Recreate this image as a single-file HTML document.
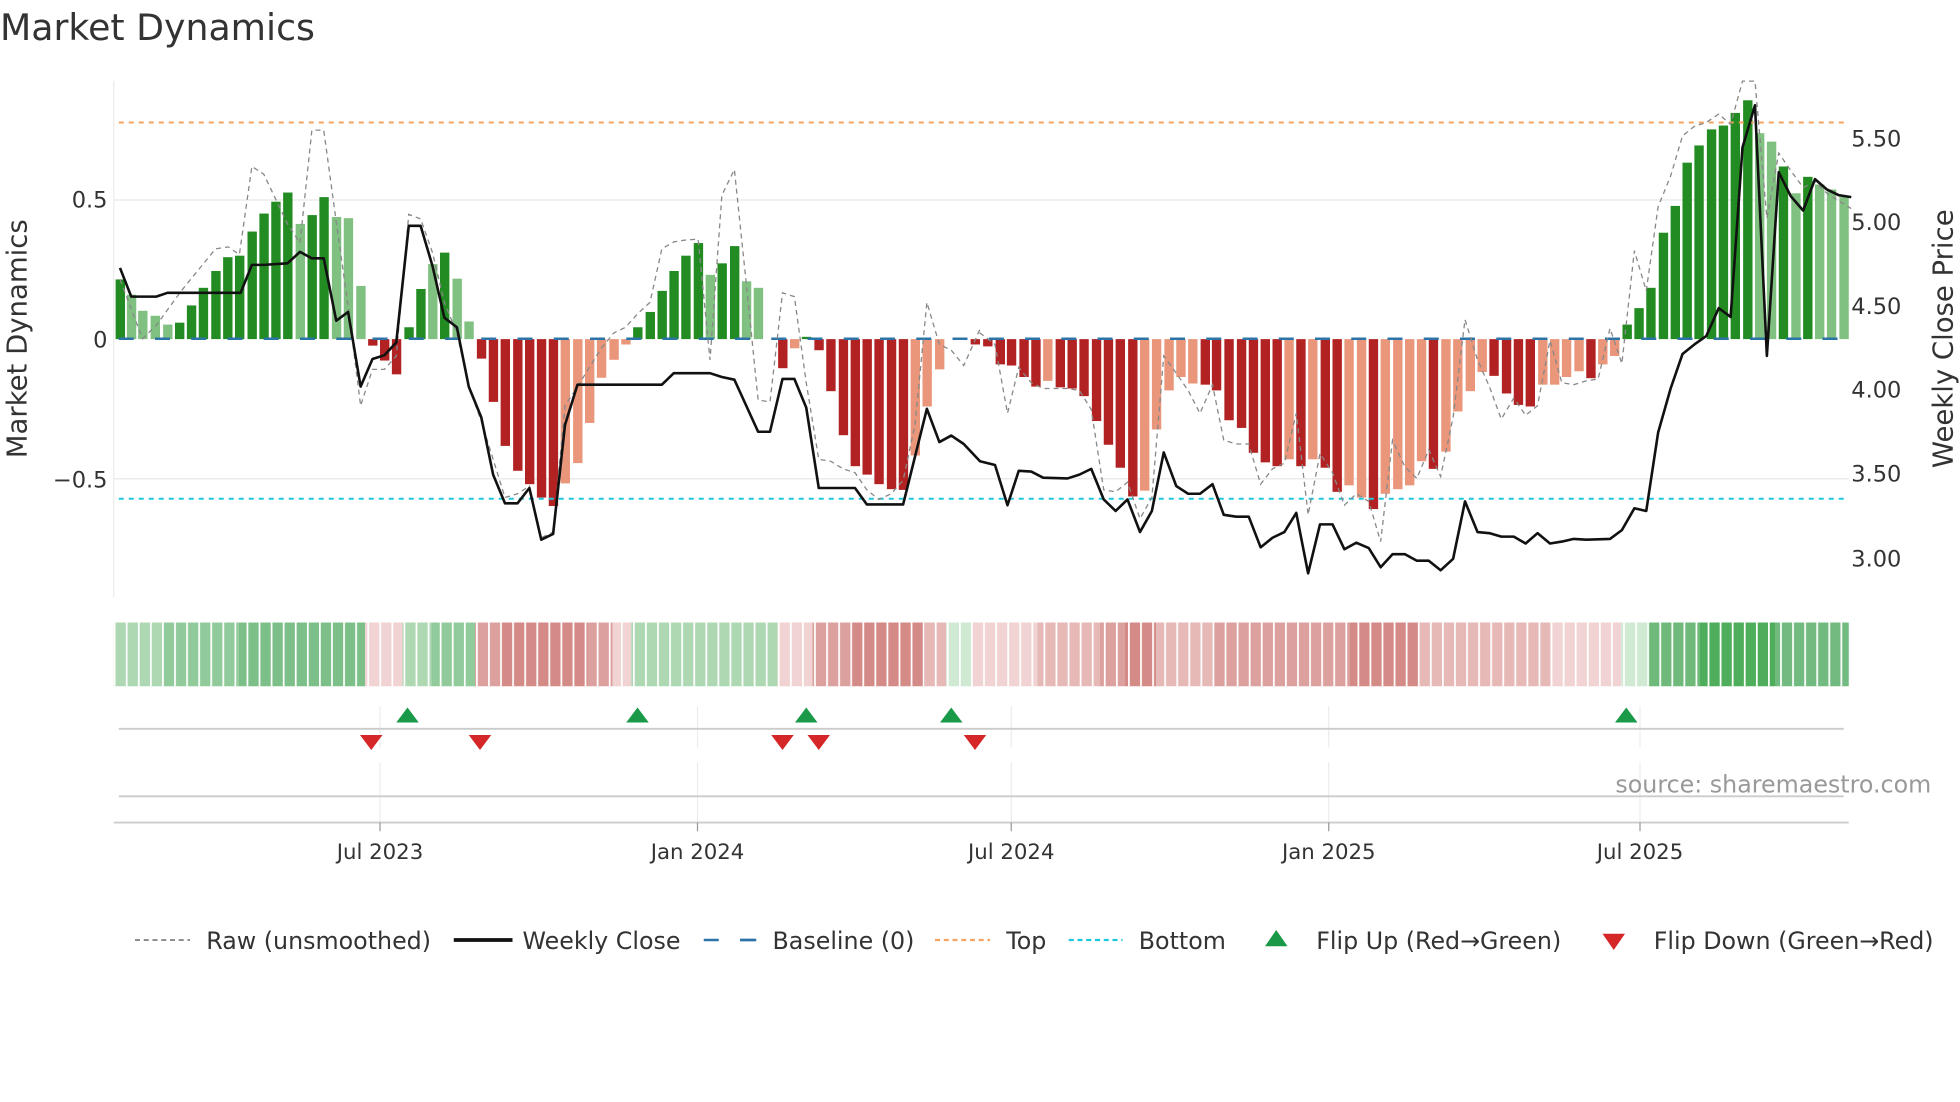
<!DOCTYPE html>
<html><head><meta charset="utf-8"><style>
html,body{margin:0;padding:0;background:#fff;}
svg{display:block;font-family:"DejaVu Sans","Liberation Sans",sans-serif;}
.G{fill:#228b22}.g{fill:#80c080}.R{fill:#b22222}.r{fill:#e9967a}
</style></head><body>
<svg width="1960" height="1102" viewBox="0 0 1568 881.6" xmlns="http://www.w3.org/2000/svg">
<defs>
<pattern id="wl" patternUnits="userSpaceOnUse" x="91" y="0" width="9.66" height="10"><rect x="0" y="0" width="1.4" height="10" fill="#fff"/></pattern>
</defs>
<text x="0" y="32" font-size="29" fill="#333">Market Dynamics</text>

<line x1="91" y1="160" x2="1479" y2="160" stroke="#ebebeb" stroke-width="1.2"/>
<line x1="91" y1="383" x2="1479" y2="383" stroke="#ebebeb" stroke-width="1.2"/>
<line x1="91" y1="65" x2="91" y2="478" stroke="#ebebeb" stroke-width="1"/>

<g transform="scale(0.5,0.3062)">
<rect class="G" x="185" y="730" width="15" height="156"/>
<rect class="g" x="203" y="770" width="15" height="116"/>
<rect class="g" x="221" y="812" width="15" height="74"/>
<rect class="g" x="241" y="825" width="15" height="61"/>
<rect class="g" x="261" y="848" width="15" height="38"/>
<rect class="G" x="280" y="843" width="15" height="43"/>
<rect class="G" x="299" y="798" width="15" height="88"/>
<rect class="G" x="318" y="752" width="15" height="134"/>
<rect class="G" x="338" y="708" width="15" height="178"/>
<rect class="G" x="357" y="672" width="15" height="214"/>
<rect class="G" x="376" y="668" width="15" height="218"/>
<rect class="G" x="396" y="605" width="15" height="281"/>
<rect class="G" x="415" y="558" width="15" height="328"/>
<rect class="G" x="434" y="527" width="15" height="359"/>
<rect class="G" x="453" y="503" width="15" height="383"/>
<rect class="g" x="473" y="585" width="15" height="301"/>
<rect class="G" x="492" y="562" width="15" height="324"/>
<rect class="G" x="511" y="515" width="15" height="371"/>
<rect class="g" x="531" y="567" width="15" height="319"/>
<rect class="g" x="550" y="570" width="15" height="316"/>
<rect class="g" x="570" y="747" width="15" height="139"/>
<rect class="R" x="589" y="886" width="15" height="17"/>
<rect class="R" x="608" y="886" width="15" height="56"/>
<rect class="R" x="627" y="886" width="15" height="92"/>
<rect class="G" x="647" y="855" width="15" height="31"/>
<rect class="G" x="666" y="755" width="15" height="131"/>
<rect class="g" x="685" y="690" width="15" height="196"/>
<rect class="G" x="704" y="660" width="15" height="226"/>
<rect class="g" x="724" y="728" width="15" height="158"/>
<rect class="g" x="743" y="840" width="15" height="46"/>
<rect class="R" x="763" y="886" width="15" height="51"/>
<rect class="R" x="782" y="886" width="15" height="164"/>
<rect class="R" x="801" y="886" width="15" height="279"/>
<rect class="R" x="821" y="886" width="15" height="344"/>
<rect class="R" x="840" y="886" width="15" height="379"/>
<rect class="R" x="859" y="886" width="15" height="414"/>
<rect class="R" x="878" y="886" width="15" height="436"/>
<rect class="r" x="897" y="886" width="15" height="377"/>
<rect class="r" x="917" y="886" width="15" height="324"/>
<rect class="r" x="936" y="886" width="15" height="219"/>
<rect class="r" x="955" y="886" width="15" height="101"/>
<rect class="r" x="975" y="886" width="15" height="54"/>
<rect class="r" x="994" y="886" width="15" height="14"/>
<rect class="G" x="1013" y="855" width="15" height="31"/>
<rect class="G" x="1033" y="815" width="15" height="71"/>
<rect class="G" x="1052" y="760" width="15" height="126"/>
<rect class="G" x="1071" y="708" width="15" height="178"/>
<rect class="G" x="1090" y="668" width="15" height="218"/>
<rect class="G" x="1110" y="635" width="15" height="251"/>
<rect class="g" x="1129" y="718" width="15" height="168"/>
<rect class="G" x="1148" y="688" width="15" height="198"/>
<rect class="G" x="1168" y="643" width="15" height="243"/>
<rect class="g" x="1187" y="735" width="15" height="151"/>
<rect class="g" x="1206" y="752" width="15" height="134"/>
<rect class="R" x="1245" y="886" width="15" height="76"/>
<rect class="r" x="1264" y="886" width="15" height="24"/>
<rect class="G" x="1283" y="880" width="15" height="6"/>
<rect class="R" x="1303" y="886" width="15" height="29"/>
<rect class="R" x="1322" y="886" width="15" height="136"/>
<rect class="R" x="1342" y="886" width="15" height="251"/>
<rect class="R" x="1361" y="886" width="15" height="332"/>
<rect class="R" x="1380" y="886" width="15" height="354"/>
<rect class="R" x="1399" y="886" width="15" height="379"/>
<rect class="R" x="1419" y="886" width="15" height="392"/>
<rect class="R" x="1438" y="886" width="15" height="394"/>
<rect class="r" x="1457" y="886" width="15" height="304"/>
<rect class="r" x="1476" y="886" width="15" height="176"/>
<rect class="r" x="1496" y="886" width="15" height="79"/>
<rect class="R" x="1553" y="886" width="15" height="14"/>
</g>
<g transform="translate(784,0) scale(0.5,0.3062)">
<rect class="R" x="5" y="886" width="15" height="19"/>
<rect class="R" x="25" y="886" width="15" height="66"/>
<rect class="R" x="43" y="886" width="15" height="69"/>
<rect class="R" x="63" y="886" width="15" height="99"/>
<rect class="R" x="82" y="886" width="15" height="124"/>
<rect class="r" x="101" y="886" width="15" height="109"/>
<rect class="R" x="121" y="886" width="15" height="126"/>
<rect class="R" x="140" y="886" width="15" height="129"/>
<rect class="R" x="159" y="886" width="15" height="149"/>
<rect class="R" x="179" y="886" width="15" height="214"/>
<rect class="R" x="198" y="886" width="15" height="276"/>
<rect class="R" x="217" y="886" width="15" height="336"/>
<rect class="R" x="237" y="886" width="15" height="411"/>
<rect class="r" x="256" y="886" width="15" height="396"/>
<rect class="r" x="275" y="886" width="15" height="236"/>
<rect class="r" x="295" y="886" width="15" height="134"/>
<rect class="r" x="314" y="886" width="15" height="99"/>
<rect class="r" x="333" y="886" width="15" height="116"/>
<rect class="R" x="353" y="886" width="15" height="119"/>
<rect class="R" x="371" y="886" width="15" height="134"/>
<rect class="R" x="391" y="886" width="15" height="212"/>
<rect class="R" x="411" y="886" width="15" height="232"/>
<rect class="R" x="430" y="886" width="15" height="297"/>
<rect class="R" x="449" y="886" width="15" height="322"/>
<rect class="R" x="468" y="886" width="15" height="332"/>
<rect class="r" x="487" y="886" width="15" height="314"/>
<rect class="R" x="506" y="886" width="15" height="332"/>
<rect class="r" x="525" y="886" width="15" height="314"/>
<rect class="R" x="545" y="886" width="15" height="336"/>
<rect class="R" x="564" y="886" width="15" height="399"/>
<rect class="r" x="583" y="886" width="15" height="382"/>
<rect class="r" x="603" y="886" width="15" height="414"/>
<rect class="R" x="622" y="886" width="15" height="444"/>
<rect class="r" x="641" y="886" width="15" height="404"/>
<rect class="r" x="661" y="886" width="15" height="392"/>
<rect class="r" x="680" y="886" width="15" height="382"/>
<rect class="r" x="699" y="886" width="15" height="319"/>
<rect class="R" x="718" y="886" width="15" height="339"/>
<rect class="r" x="738" y="886" width="15" height="294"/>
<rect class="r" x="757" y="886" width="15" height="189"/>
<rect class="r" x="777" y="886" width="15" height="136"/>
<rect class="r" x="796" y="886" width="15" height="86"/>
<rect class="R" x="815" y="886" width="15" height="96"/>
<rect class="R" x="835" y="886" width="15" height="142"/>
<rect class="R" x="854" y="886" width="15" height="172"/>
<rect class="R" x="873" y="886" width="15" height="176"/>
<rect class="r" x="893" y="886" width="15" height="119"/>
<rect class="r" x="912" y="886" width="15" height="119"/>
<rect class="r" x="931" y="886" width="15" height="99"/>
<rect class="r" x="951" y="886" width="15" height="84"/>
<rect class="R" x="970" y="886" width="15" height="102"/>
<rect class="r" x="989" y="886" width="15" height="66"/>
<rect class="r" x="1008" y="886" width="15" height="44"/>
<rect class="G" x="1028" y="848" width="15" height="38"/>
<rect class="G" x="1047" y="805" width="15" height="81"/>
<rect class="G" x="1066" y="752" width="15" height="134"/>
<rect class="G" x="1086" y="608" width="15" height="278"/>
<rect class="G" x="1105" y="538" width="15" height="348"/>
<rect class="G" x="1124" y="425" width="15" height="461"/>
<rect class="G" x="1143" y="380" width="15" height="506"/>
<rect class="G" x="1163" y="338" width="15" height="548"/>
<rect class="G" x="1182" y="328" width="15" height="558"/>
<rect class="G" x="1201" y="295" width="15" height="591"/>
<rect class="G" x="1221" y="262" width="15" height="624"/>
<rect class="g" x="1240" y="348" width="15" height="538"/>
<rect class="g" x="1259" y="370" width="15" height="516"/>
<rect class="G" x="1278" y="435" width="15" height="451"/>
<rect class="g" x="1298" y="505" width="15" height="381"/>
<rect class="G" x="1317" y="462" width="15" height="424"/>
<rect class="g" x="1336" y="482" width="15" height="404"/>
<rect class="g" x="1355" y="495" width="15" height="391"/>
<rect class="g" x="1375" y="515" width="15" height="371"/>
</g>

<line x1="95" y1="98" x2="1475" y2="98" stroke="#f4a460" stroke-width="1.6" stroke-dasharray="4,4"/>
<line x1="95" y1="399" x2="1475" y2="399" stroke="#1ec8dc" stroke-width="1.6" stroke-dasharray="4,4"/>
<line x1="95" y1="271" x2="1475" y2="271" stroke="#2c73a8" stroke-width="2" stroke-dasharray="12,17"/>

<g transform="scale(0.5,0.3062)">
<polyline fill="none" stroke="#888" stroke-width="1.3" stroke-dasharray="5,4" vector-effect="non-scaling-stroke" points="192,730 228,885 250,850 290,760 325,690 345,650 365,645 383,665 403,435 422,455 441,520 460,585 480,635 499,340 518,340 538,580 557,800 577,1060 596,965 615,965 634,930 654,560 673,572 692,660 711,790 731,870 750,1010 770,1100 789,1200 808,1300 828,1290 847,1270 866,1405 885,1390 904,1060 924,1010 943,960 962,910 982,870 1001,855 1020,820 1040,790 1059,650 1078,632 1097,627 1117,625 1136,940 1155,510 1175,443 1194,740 1213,1045 1232,1050 1252,765 1271,775 1290,1000 1310,1200 1329,1205 1349,1225 1368,1235 1387,1280 1406,1305 1426,1290 1445,1255 1464,1110 1483,790 1503,900 1522,915 1542,955 1568,860 1568,870 1592,900 1612,1080 1630,960 1650,1000 1669,1015 1708,1015 1727,1020 1746,1070 1766,1280 1785,1285 1804,1260 1824,1355 1843,1300 1862,930 1882,975 1901,1020 1920,1080 1940,1005 1958,1150 1978,1160 1998,1160 2017,1265 2036,1225 2055,1210 2074,1080 2093,1345 2112,1185 2132,1235 2151,1320 2170,1290 2190,1310 2209,1415 2228,1150 2248,1220 2267,1250 2286,1175 2305,1245 2325,1090 2344,835 2364,940 2383,1010 2402,1095 2422,1040 2441,1085 2460,1060 2480,890 2499,1000 2518,1005 2538,995 2557,990 2576,858 2595,950 2615,655 2634,760 2653,540 2673,460 2692,355 2711,330 2730,320 2750,298 2769,325 2788,212 2808,212 2827,570 2846,400 2865,445 2885,490 2904,475 2923,505 2942,525 2962,545"/>
<polyline fill="none" stroke="#111" stroke-width="2.6" stroke-linejoin="round" vector-effect="non-scaling-stroke" points="192,700 210,775 250,775 268,765 385,765 403,692 422,692 460,688 480,658 499,675 518,675 538,838 557,815 577,1010 596,938 615,928 634,895 654,590 673,590 692,695 711,830 731,855 750,1010 770,1090 789,1240 808,1315 828,1315 847,1275 866,1410 885,1395 904,1110 924,1005 1059,1005 1078,975 1136,975 1155,985 1175,992 1213,1128 1232,1128 1252,990 1271,990 1290,1065 1310,1275 1368,1275 1387,1318 1445,1318 1483,1068 1503,1155 1522,1138 1542,1160 1568,1205 1592,1215 1612,1320 1630,1230 1650,1232 1669,1248 1708,1250 1727,1240 1746,1225 1766,1305 1785,1335 1804,1305 1824,1390 1843,1335 1862,1182 1882,1270 1901,1290 1920,1290 1940,1265 1958,1345 1978,1350 1998,1350 2017,1430 2036,1405 2055,1390 2074,1340 2093,1498 2112,1370 2132,1370 2151,1435 2170,1418 2190,1432 2209,1482 2228,1448 2248,1448 2267,1465 2286,1465 2305,1490 2325,1460 2344,1310 2364,1390 2383,1393 2402,1402 2422,1402 2441,1420 2460,1393 2480,1420 2499,1415 2518,1408 2538,1410 2576,1408 2595,1385 2615,1328 2634,1335 2653,1130 2673,1015 2692,925 2711,900 2730,878 2750,805 2769,828 2788,385 2808,275 2827,930 2846,450 2865,512 2885,550 2904,468 2923,495 2942,510 2962,515"/>
</g>

<g font-size="18" fill="#333">
<text x="86" y="166" text-anchor="end">0.5</text>
<text x="86" y="278" text-anchor="end">0</text>
<text x="86" y="390" text-anchor="end">−0.5</text>
<text x="1481" y="117">5.50</text>
<text x="1481" y="184">5.00</text>
<text x="1481" y="251">4.50</text>
<text x="1481" y="318">4.00</text>
<text x="1481" y="385">3.50</text>
<text x="1481" y="453">3.00</text>
</g>
<text transform="translate(21,271) rotate(-90)" font-size="22" fill="#333" text-anchor="middle">Market Dynamics</text>
<text transform="translate(1562,271) rotate(-90)" font-size="22" fill="#333" text-anchor="middle">Weekly Close Price</text>

<g>
<rect x="91" y="498" width="40" height="51" fill="#add8b2"/>
<rect x="131" y="498" width="60" height="51" fill="#92cb9b"/>
<rect x="191" y="498" width="101" height="51" fill="#7cbf88"/>
<rect x="292" y="498" width="30" height="51" fill="#f0d3d2"/>
<rect x="322" y="498" width="23" height="51" fill="#add8b2"/>
<rect x="345" y="498" width="35" height="51" fill="#92cb9b"/>
<rect x="380" y="498" width="20" height="51" fill="#dca19e"/>
<rect x="400" y="498" width="70" height="51" fill="#d48a86"/>
<rect x="470" y="498" width="20" height="51" fill="#dca19e"/>
<rect x="490" y="498" width="15" height="51" fill="#f0d3d2"/>
<rect x="505" y="498" width="117" height="51" fill="#add8b2"/>
<rect x="622" y="498" width="28" height="51" fill="#f0d3d2"/>
<rect x="650" y="498" width="30" height="51" fill="#dca19e"/>
<rect x="680" y="498" width="60" height="51" fill="#d48a86"/>
<rect x="740" y="498" width="17" height="51" fill="#e6b9b7"/>
<rect x="757" y="498" width="20" height="51" fill="#d0e9d3"/>
<rect x="777" y="498" width="53" height="51" fill="#f0d3d2"/>
<rect x="830" y="498" width="50" height="51" fill="#e6b9b7"/>
<rect x="880" y="498" width="20" height="51" fill="#dca19e"/>
<rect x="900" y="498" width="25" height="51" fill="#d48a86"/>
<rect x="925" y="498" width="45" height="51" fill="#e6b9b7"/>
<rect x="970" y="498" width="110" height="51" fill="#dca19e"/>
<rect x="1080" y="498" width="55" height="51" fill="#d48a86"/>
<rect x="1135" y="498" width="105" height="51" fill="#e6b9b7"/>
<rect x="1240" y="498" width="57" height="51" fill="#f0d3d2"/>
<rect x="1297" y="498" width="21" height="51" fill="#d0e9d3"/>
<rect x="1318" y="498" width="42" height="51" fill="#6fba7b"/>
<rect x="1360" y="498" width="60" height="51" fill="#4fae5c"/>
<rect x="1420" y="498" width="59" height="51" fill="#72bb80"/>
<rect x="91" y="498" width="1388" height="51" fill="url(#wl)"/>
</g>

<g stroke="#ececec" stroke-width="1">
<line x1="304" y1="565" x2="304" y2="598"/><line x1="558" y1="565" x2="558" y2="598"/><line x1="809" y1="565" x2="809" y2="598"/><line x1="1063" y1="565" x2="1063" y2="598"/><line x1="1312" y1="565" x2="1312" y2="598"/>
<line x1="304" y1="610" x2="304" y2="658"/><line x1="558" y1="610" x2="558" y2="658"/><line x1="809" y1="610" x2="809" y2="658"/><line x1="1063" y1="610" x2="1063" y2="658"/><line x1="1312" y1="610" x2="1312" y2="658"/>
</g>
<line x1="95" y1="583" x2="1475" y2="583" stroke="#ccc" stroke-width="1.5"/>
<line x1="95" y1="637" x2="1475" y2="637" stroke="#ccc" stroke-width="1.5"/>
<line x1="91" y1="658" x2="1479" y2="658" stroke="#ccc" stroke-width="1.5"/>
<g fill="#1a9a48">
<polygon points="317,578 326,566 335,578"/><polygon points="501,578 510,566 519,578"/><polygon points="636,578 645,566 654,578"/><polygon points="752,578 761,566 770,578"/><polygon points="1292,578 1301,566 1310,578"/>
</g>
<g fill="#d62728">
<polygon points="288,588 297,600 306,588"/><polygon points="375,588 384,600 393,588"/><polygon points="617,588 626,600 635,588"/><polygon points="646,588 655,600 664,588"/><polygon points="771,588 780,600 789,588"/>
</g>
<g stroke="#999" stroke-width="1"><line x1="304" y1="658" x2="304" y2="665"/><line x1="558" y1="658" x2="558" y2="665"/><line x1="809" y1="658" x2="809" y2="665"/><line x1="1063" y1="658" x2="1063" y2="665"/><line x1="1312" y1="658" x2="1312" y2="665"/></g>
<text x="1545" y="634" font-size="19" fill="#999" text-anchor="end">source: sharemaestro.com</text>
<g font-size="17" fill="#333" text-anchor="middle">
<text x="304" y="687">Jul 2023</text><text x="558" y="687">Jan 2024</text><text x="809" y="687">Jul 2024</text><text x="1063" y="687">Jan 2025</text><text x="1312" y="687">Jul 2025</text>
</g>

<g font-size="19" fill="#333">
<line x1="108" y1="752" x2="152" y2="752" stroke="#888" stroke-width="1.5" stroke-dasharray="4,3"/>
<text x="165" y="759">Raw (unsmoothed)</text>
<line x1="363" y1="752" x2="410" y2="752" stroke="#111" stroke-width="3"/>
<text x="418" y="759">Weekly Close</text>
<line x1="563" y1="752" x2="605" y2="752" stroke="#2c73a8" stroke-width="2" stroke-dasharray="12,17"/>
<line x1="592" y1="752" x2="605" y2="752" stroke="#2c73a8" stroke-width="2"/>
<text x="618" y="759">Baseline (0)</text>
<line x1="748" y1="752" x2="792" y2="752" stroke="#f4a460" stroke-width="1.8" stroke-dasharray="4,3"/>
<text x="805" y="759">Top</text>
<line x1="855" y1="752" x2="898" y2="752" stroke="#1ec8dc" stroke-width="1.8" stroke-dasharray="4,3"/>
<text x="911" y="759">Bottom</text>
<polygon points="1012,757 1021,744 1030,757" fill="#1a9a48"/>
<text x="1053" y="759">Flip Up (Red→Green)</text>
<polygon points="1282,747 1291,760 1300,747" fill="#d62728"/>
<text x="1323" y="759">Flip Down (Green→Red)</text>
</g>
</svg>
</body></html>
